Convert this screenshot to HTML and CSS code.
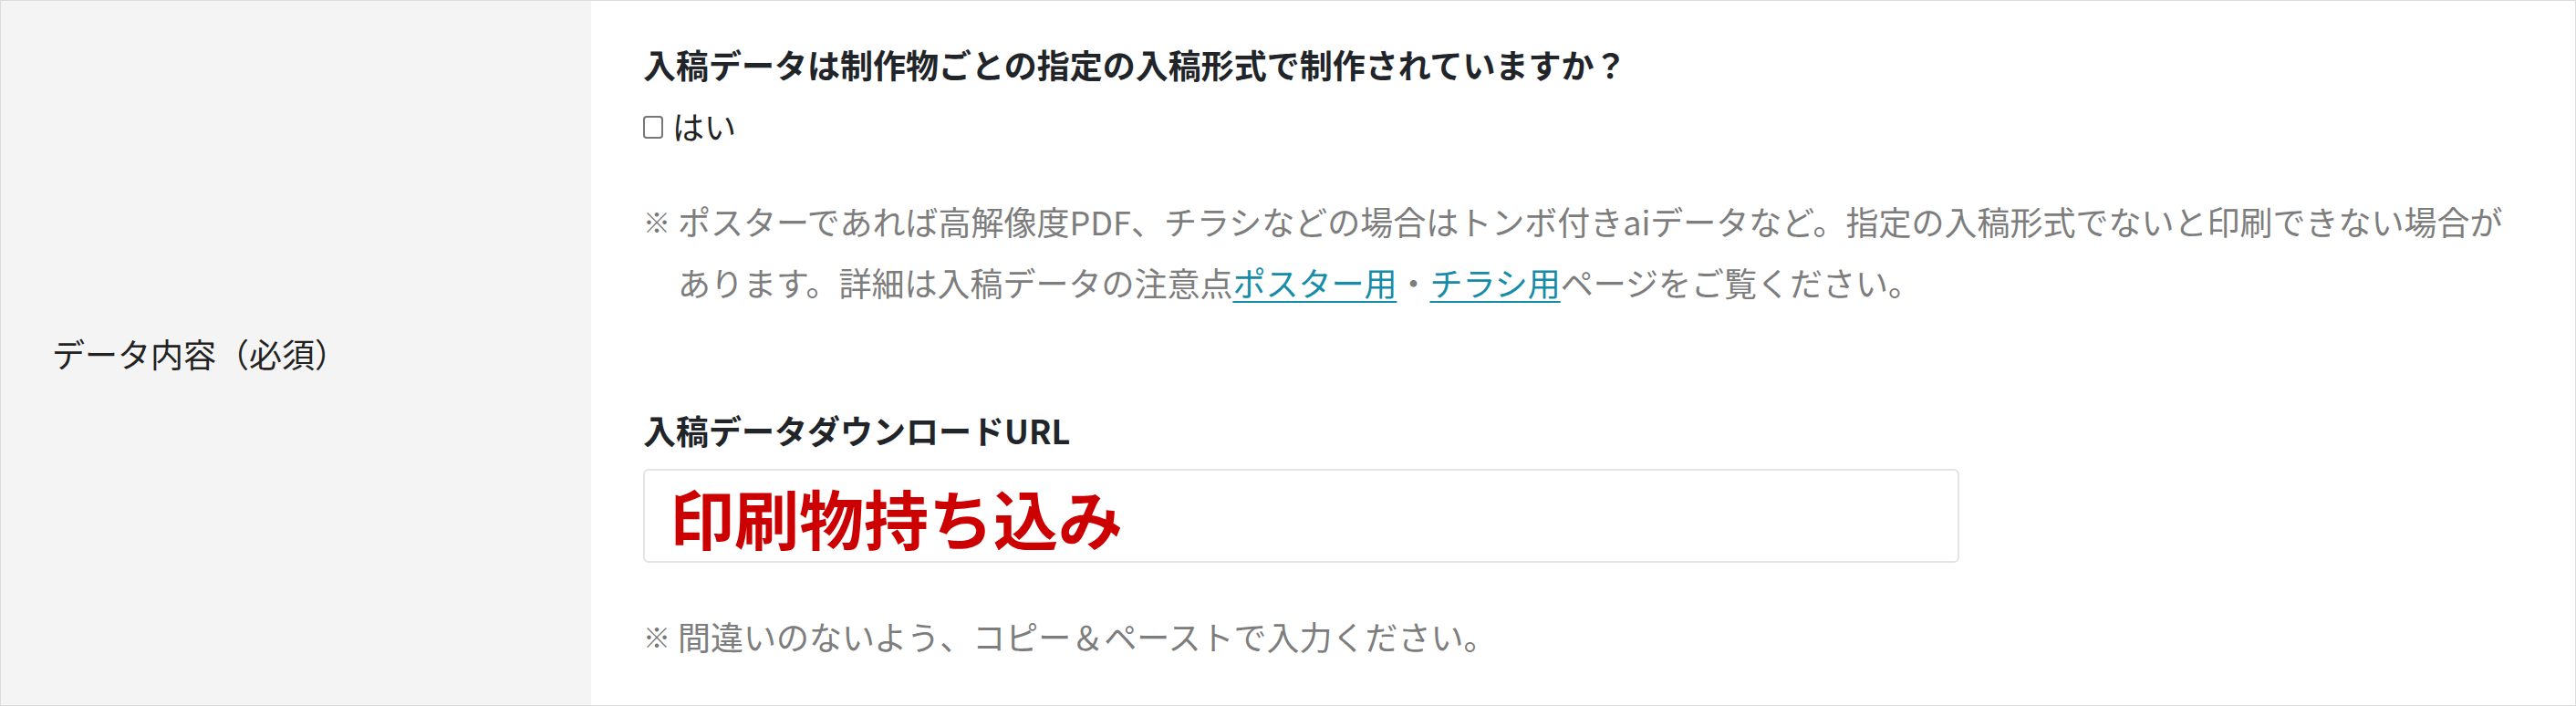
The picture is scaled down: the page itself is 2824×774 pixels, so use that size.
FILE: index.html
```html
<!DOCTYPE html>
<html lang="ja">
<head>
<meta charset="utf-8">
<title>データ内容</title>
<link rel="stylesheet" href="styles.css">
</head>
<body>
<div class="form-row">
  <div class="form-label">データ内容（必須）</div>
  <div class="form-body">
    <p class="q-title">入稿データは制作物ごとの指定の入稿形式で制作されていますか？</p>
    <label class="check"><input type="checkbox" class="check-box"><span>はい</span></label>
    <div class="note note-first">
      <span class="note-mark">※</span>
      <span class="note-text">ポスターであれば高解像度PDF、チラシなどの場合はトンボ付きaiデータなど。指定の入稿形式でないと印刷できない場合があります。詳細は入稿データの注意点<a href="#" class="link">ポスター用</a>・<a href="#" class="link">チラシ用</a>ページをご覧ください。</span>
    </div>
    <p class="q-title q-url">入稿データダウンロードURL</p>
    <div class="url-box">印刷物持ち込み</div>
    <div class="note note-last">
      <span class="note-mark">※</span>
      <span class="note-text">間違いのないよう、コピー＆ペーストで入力ください。</span>
    </div>
  </div>
</div>
</body>
</html>
```
FILE: styles.css
```css
html, body {
  margin: 0;
  padding: 0;
  background: #ffffff;
}
body {
  font-family: "Noto Sans CJK JP", "Noto Sans", sans-serif;
  color: #222222;
}
.form-row {
  display: flex;
  height: 774px;
  box-sizing: border-box;
  border: 1px solid #dcdcdc;
}
.form-label {
  flex: 0 0 647px;
  box-sizing: border-box;
  background: #f4f4f4;
  display: flex;
  align-items: center;
  padding-left: 56px;
  font-size: 36px;
  color: #222222;
}
.form-body {
  flex: 1;
  padding: 42px 58px 0 57px;
}
.q-title {
  margin: 0;
  font-size: 36px;
  line-height: 54px;
  font-weight: 700;
  color: #212529;
}
.check {
  display: flex;
  align-items: center;
  margin-top: 13px;
  height: 54px;
  font-size: 35px;
  color: #222222;
}
.check-box {
  appearance: none;
  -webkit-appearance: none;
  box-sizing: border-box;
  width: 22px;
  height: 25px;
  margin: 4px 10px 0 0;
  border: 2px solid #767676;
  border-radius: 4px;
  background: #ffffff;
}
.note {
  display: flex;
  font-size: 36px;
  line-height: 67px;
  color: #7d7d7d;
}
.note-first {
  margin-top: 45px;
}
.note-mark {
  flex: 0 0 38px;
  font-size: 30px;
  font-weight: 700;
  color: #777777;
}
.note-text {
  flex: 1;
}
.link {
  color: #168ca8;
  text-decoration: underline;
  text-decoration-thickness: 2px;
  text-underline-offset: 5px;
}
.q-url {
  margin-top: 101px;
}
.url-box {
  margin-top: 16px;
  width: 1443px;
  height: 103px;
  box-sizing: border-box;
  border: 2px solid #e4e4e4;
  border-radius: 6px;
  padding-left: 27px;
  display: flex;
  align-items: center;
  font-size: 71px;
  font-weight: 700;
  color: #cc0000;
}
.note-last {
  margin-top: 47px;
}
```
